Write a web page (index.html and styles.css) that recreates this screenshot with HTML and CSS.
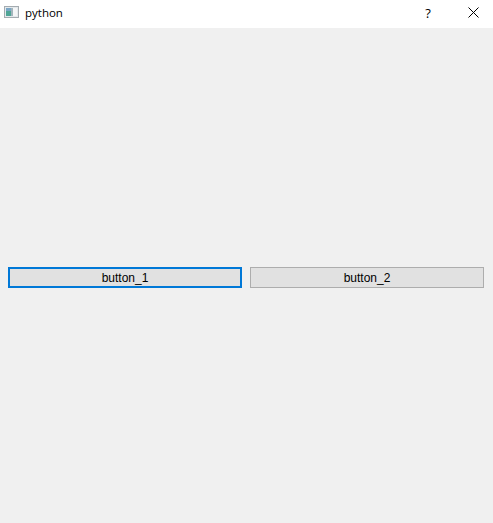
FILE: index.html
```html
<!DOCTYPE html>
<html lang="en">
<head>
<meta charset="utf-8">
<title>python</title>
<link rel="stylesheet" href="styles.css">
</head>
<body>
<div class="window">
  <header class="titlebar">
    <svg class="app-icon" width="15" height="12" viewBox="0 0 15 12" aria-hidden="true">
      <rect x="0.5" y="0.5" width="14" height="11" fill="#e4e9ec" stroke="#a4abb0"/>
      <rect x="2" y="2" width="5" height="8" fill="#4fa596"/>
      <rect x="2" y="2" width="5" height="3" fill="#7aa6c6"/>
      <rect x="7" y="2" width="2" height="8" fill="#a3b4bc"/>
      <rect x="9" y="2" width="4" height="8" fill="#f4f6f7"/>
    </svg>
    <span class="title">python</span>
    <span class="help">?</span>
    <svg class="close" width="11" height="11" viewBox="0 0 11 11" aria-hidden="true">
      <path d="M0.5 0.5L10.5 10.5M10.5 0.5L0.5 10.5" stroke="#000" stroke-width="1" fill="none"/>
    </svg>
  </header>
  <main class="content">
    <div class="buttons">
      <button class="btn btn-focus" type="button">button_1</button>
      <button class="btn" type="button">button_2</button>
    </div>
  </main>
</div>
</body>
</html>
```
FILE: styles.css
```css
html, body {
  margin: 0;
  padding: 0;
  height: 100%;
  overflow: hidden;
}
.window {
  display: flex;
  flex-direction: column;
  height: 523px;
  background: #f0f0f0;
  font-family: "Liberation Sans", Arial, sans-serif;
}
.titlebar {
  display: flex;
  align-items: center;
  height: 28px;
  flex: none;
  background: #fff;
  padding-left: 4px;
  box-sizing: border-box;
}
.app-icon {
  flex: none;
  margin-top: -4px;
}
.title {
  margin-left: 6px;
  margin-top: -3px;
  font-family: "Open Sans", "Liberation Sans", sans-serif;
  font-size: 11.5px;
  color: #000;
}
.help {
  margin-left: auto;
  margin-top: -3px;
  width: 10px;
  font-family: "Open Sans", "Liberation Sans", sans-serif;
  font-size: 13px;
  font-weight: 400;
  color: #000;
  text-align: center;
}
.close {
  flex: none;
  margin: -4px 14px 0 35px;
}
.content {
  flex: 1;
  display: flex;
  flex-direction: column;
  justify-content: center;
  padding: 4px 9px 0 8px;
}
.buttons {
  display: grid;
  grid-template-columns: 1fr 1fr;
  gap: 8px;
}
.btn {
  height: 21px;
  padding: 0;
  margin: 0;
  box-sizing: border-box;
  background: #e1e1e1;
  border: 1px solid #adadad;
  border-radius: 0;
  font-family: "Liberation Sans", Arial, sans-serif;
  font-size: 12px;
  color: #000;
}
.btn-focus {
  border: 2px solid #0078d7;
}
```
